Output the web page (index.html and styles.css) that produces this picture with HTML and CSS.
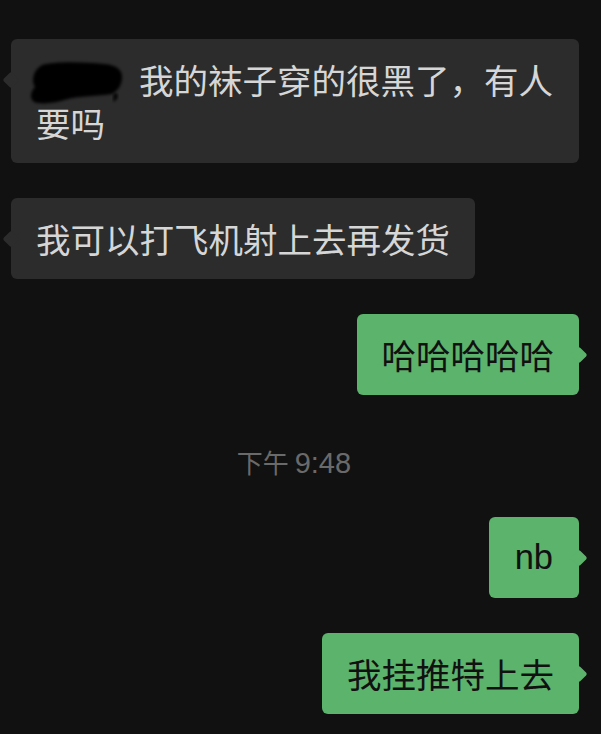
FILE: index.html
```html
<!DOCTYPE html>
<html lang="zh">
<head>
    <meta charset="UTF-8">
    <meta name="viewport" content="width=device-width, initial-scale=1.0">
    <title>聊天</title>
    <link rel="stylesheet" href="styles.css">
</head>
<body>
    <div class="chat">
        <div class="row left">
            <div class="bubble">
                <svg class="blot" width="100" height="48" viewBox="0 0 100 48" aria-hidden="true">
                    <defs>
                        <filter id="smudge" x="-20%" y="-20%" width="140%" height="140%">
                            <feGaussianBlur stdDeviation="1.6"/>
                        </filter>
                    </defs>
                    <path filter="url(#smudge)" fill="#050505"
                          d="M16 6 C30 2 58 3 78 5 C92 6 97 12 96 20 C95 28 91 32 86 35 C72 37 54 37 42 40 C30 44 16 46 8 43 C3 39 5 32 9 28 C5 22 7 11 16 6 Z"/>
                    <path filter="url(#smudge)" fill="#050505" d="M88 34 C92 34 93 37 90 41 L87 43 C88 40 87 37 88 34 Z"/>
                </svg>我的袜子穿的很黑了，有人要吗
            </div>
        </div>

        <div class="row left">
            <div class="bubble">我可以打飞机射上去再发货</div>
        </div>

        <div class="row right">
            <div class="bubble">哈哈哈哈哈</div>
        </div>

        <div class="time">下午 <span class="clock">9:48</span></div>

        <div class="row right">
            <div class="bubble latin">nb</div>
        </div>

        <div class="row right">
            <div class="bubble">我挂推特上去</div>
        </div>
    </div>
</body>
</html>
```

FILE: styles.css
```css
body {
    margin: 0;
    background-color: #111111;
    font-family: "Noto Sans CJK SC", sans-serif;
    height: 734px;
    overflow: hidden;
}

.chat {
    display: flex;
    flex-direction: column;
    padding: 39px 22px 0 11px;
}

.row {
    display: flex;
    margin-top: 35px;
}

.row:first-child {
    margin-top: 0;
}

.row.right {
    justify-content: flex-end;
}

.bubble {
    position: relative;
    max-width: 568px;
    box-sizing: border-box;
    padding: 19px 25px;
    border-radius: 6px;
    font-size: 34.5px;
    line-height: 43px;
}

.bubble.latin {
    font-family: "Liberation Sans", sans-serif;
    padding: 19px 26px;
}

/* little arrow pointing at the speaker */
.bubble::before {
    content: "";
    position: absolute;
    top: 35px;
    width: 12px;
    height: 12px;
    border-radius: 2px;
    transform: rotate(45deg);
}

.left .bubble {
    background-color: #2c2c2c;
    color: #d6d6d6;
}

.left .bubble::before {
    left: -6px;
    background-color: #2c2c2c;
}

.right .bubble {
    background-color: #5cb36c;
    color: #111111;
}

.right .bubble::before {
    right: -6px;
    background-color: #5cb36c;
}

/* scribbled-out name */
.blot {
    display: inline-block;
    vertical-align: middle;
    margin: -14px 13px -10px -10px;
}

.time {
    margin-top: 48px;
    text-align: center;
    padding-right: 2px;
    font-size: 26px;
    line-height: 38px;
    color: #6a6a6a;
}

.clock {
    font-family: "Liberation Sans", sans-serif;
    font-size: 29px;
}

.time + .row {
    margin-top: 35px;
}
```
